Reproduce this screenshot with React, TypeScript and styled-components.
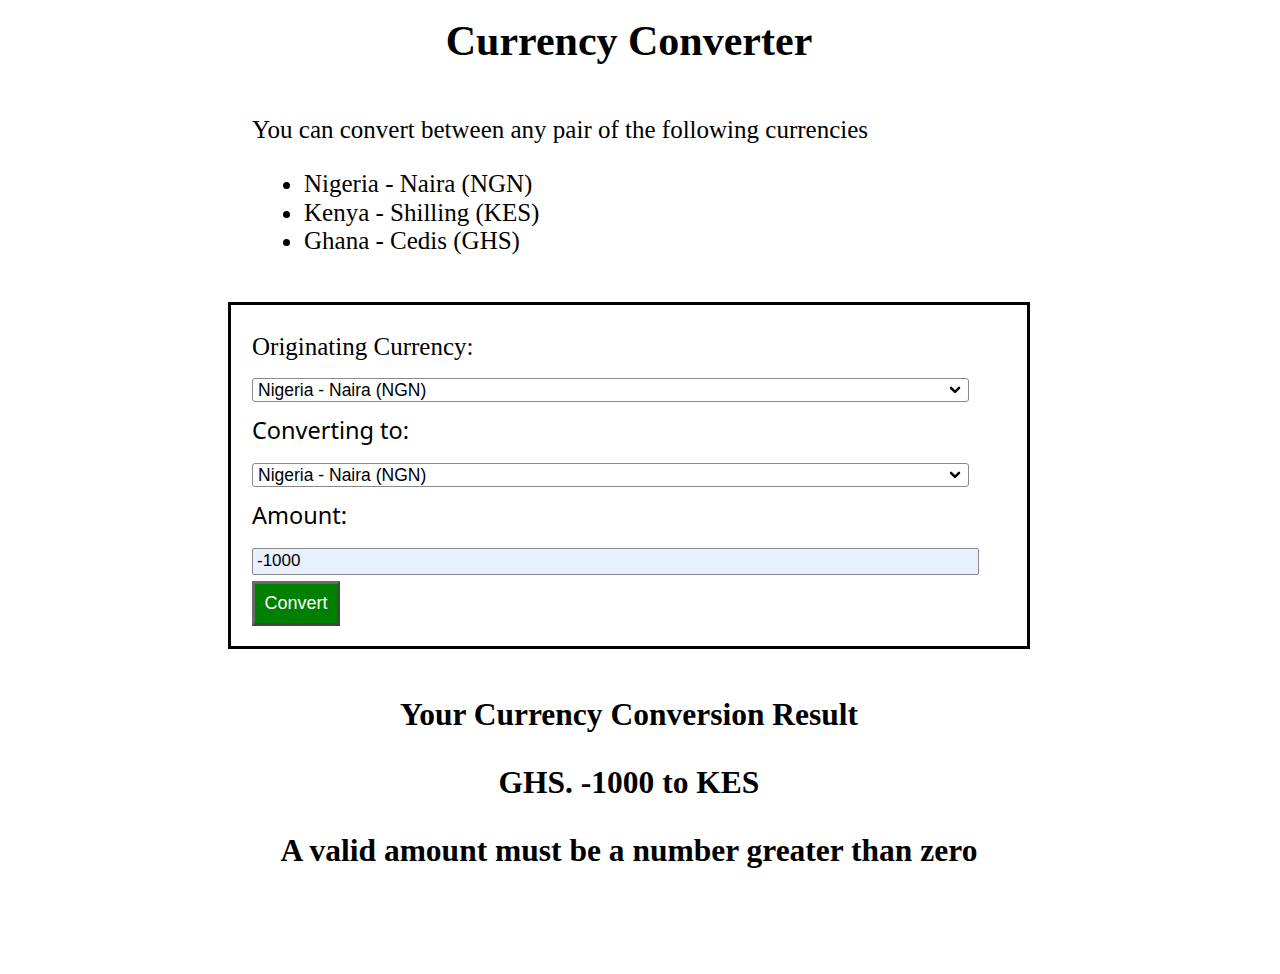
import React from "react";
import styled, { createGlobalStyle } from "styled-components";

const GlobalStyle = createGlobalStyle`
  html, body { margin: 0; padding: 0; background: #fff; }
  body { font-family: "Liberation Serif", "Times New Roman", serif; color: #000; }
`;

const chevron = encodeURIComponent(
  '<svg xmlns="http://www.w3.org/2000/svg" width="12" height="8" viewBox="0 0 12 8"><path d="M2 1.8 L6 5.8 L10 1.8" fill="none" stroke="#000" stroke-width="2.5" stroke-linecap="round" stroke-linejoin="round"/></svg>'
);

const Page = styled.div`
  width: 1258px;
  padding-top: 17px;
  padding-bottom: 60px;
`;

const Title = styled.h1`
  margin: 0;
  text-align: center;
  font-size: 42px;
  line-height: 48px;
  font-weight: 700;
`;

const Container = styled.main`
  width: 802px;
  margin: 0 auto;
  display: flex;
  flex-direction: column;
`;

const Intro = styled.section`
  padding: 0 24px;
  margin-top: 51px;
`;

const Lead = styled.p`
  margin: 0;
  font-size: 25px;
  line-height: 28px;
`;

const CurrencyList = styled.ul`
  margin: 26px 0 0;
  padding-left: 52px;
  font-size: 25px;
  line-height: 28.5px;
`;

const Box = styled.form`
  margin-top: 46px;
  border: 3px solid #000;
  padding: 28px 21px 20px;
  display: flex;
  flex-direction: column;
  align-items: flex-start;
`;

const Label = styled.label<{ $sans?: boolean }>`
  font-family: ${(p) =>
    p.$sans ? '"Noto Sans", "Open Sans", sans-serif' : '"Liberation Serif", "Times New Roman", serif'};
  font-size: ${(p) => (p.$sans ? "23.5px" : "25px")};
  line-height: 28px;
  margin-bottom: ${(p) => (p.$sans ? "19px" : "17px")};
`;

const Select = styled.select`
  appearance: none;
  -webkit-appearance: none;
  width: 717px;
  height: 24px;
  box-sizing: border-box;
  border: 1px solid #8a8a8a;
  border-radius: 3px;
  background: #fff url("data:image/svg+xml,${chevron}") no-repeat right 7px center / 12px 8px;
  font-family: "Liberation Sans", Arial, sans-serif;
  font-size: 17.5px;
  color: #000;
  padding: 0 24px 0 5px;
  margin-bottom: 14px;
`;

const Input = styled.input`
  width: 727px;
  height: 27px;
  box-sizing: border-box;
  border: 1px solid #8a8a8a;
  border-radius: 2px;
  background: #e8f0fe;
  font-family: "Liberation Sans", Arial, sans-serif;
  font-size: 17px;
  color: #000;
  padding: 0 4px;
  margin: 0 0 6px;
`;

const ConvertButton = styled.button`
  width: 88px;
  height: 45px;
  box-sizing: border-box;
  background: #008000;
  color: #fff;
  border: 3px solid;
  border-color: #6a6a6a #444 #444 #6a6a6a;
  font-family: "Liberation Sans", Arial, sans-serif;
  font-size: 18px;
  padding: 0;
  cursor: pointer;
`;

const Results = styled.section`
  margin-top: 49px;
  display: flex;
  flex-direction: column;
  align-items: center;
  gap: 34px;
`;

const ResultHeading = styled.h2`
  margin: 0;
  font-size: 31.5px;
  line-height: 34px;
  font-weight: 700;
  text-align: center;
  white-space: nowrap;
`;

const currencies = ["Nigeria - Naira (NGN)", "Kenya - Shilling (KES)", "Ghana - Cedis (GHS)"];

export default function App() {
  return (
    <>
      <GlobalStyle />
      <Page>
        <Title>Currency Converter</Title>
        <Container>
          <Intro>
            <Lead>You can convert between any pair of the following currencies</Lead>
            <CurrencyList>
              {currencies.map((c) => (
                <li key={c}>{c}</li>
              ))}
            </CurrencyList>
          </Intro>
          <Box onSubmit={(e) => e.preventDefault()}>
            <Label htmlFor="from">Originating Currency:</Label>
            <Select id="from" defaultValue={currencies[0]}>
              {currencies.map((c) => (
                <option key={c}>{c}</option>
              ))}
            </Select>
            <Label $sans htmlFor="to">Converting to:</Label>
            <Select id="to" defaultValue={currencies[0]}>
              {currencies.map((c) => (
                <option key={c}>{c}</option>
              ))}
            </Select>
            <Label $sans htmlFor="amount">Amount:</Label>
            <Input id="amount" type="text" defaultValue="-1000" />
            <ConvertButton type="submit">Convert</ConvertButton>
          </Box>
          <Results>
            <ResultHeading>Your Currency Conversion Result</ResultHeading>
            <ResultHeading>GHS. -1000 to KES</ResultHeading>
            <ResultHeading>A valid amount must be a number greater than zero</ResultHeading>
          </Results>
        </Container>
      </Page>
    </>
  );
}
